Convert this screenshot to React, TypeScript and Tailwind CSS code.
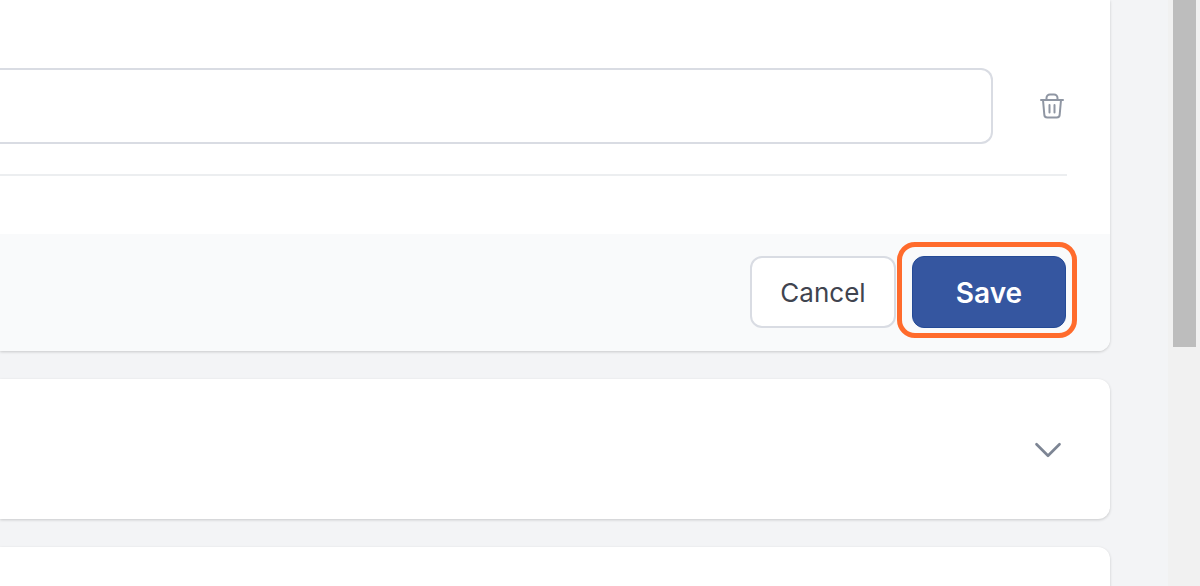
import { ChevronDown } from "lucide-react";

function TrashIcon() {
  return (
    <svg viewBox="0 0 24 26" className="h-[26px] w-6 text-[#8f96a3]" fill="none" stroke="currentColor" strokeWidth="2" strokeLinecap="round" strokeLinejoin="round">
      <path d="M1 7h22" />
      <path d="M6.5 7V5a3.5 3.5 0 0 1 3.5-3.5h4A3.5 3.5 0 0 1 17.5 5v2" />
      <path d="M3 7l1.3 14.5a3 3 0 0 0 3 3h9.400a3 3 0 0 0 3-3L21 7" />
      <path d="M9.5 12v7.500M14.500 12v7.500" />
    </svg>
  );
}

export default function App() {
  return (
    <div className="flex h-[586px] w-[1200px] overflow-hidden bg-[#f3f4f6] font-['Inter',sans-serif]">
      {/* Page content */}
      <main className="flex w-[1168px] flex-col gap-7 pr-[58px]">
        <section className="h-[351px] shrink-0 overflow-hidden rounded-br-xl bg-white shadow-[0_1px_3px_rgba(0,0,0,0.18)]">
          <div className="h-[234px] pt-[68px] pr-[43px]">
            <div className="flex items-center">
              <div className="h-[76px] flex-1 rounded-r-xl border-y-2 border-r-2 border-[#d9dce3] bg-white" />
              <div className="flex w-[74px] justify-end pr-[3px]">
                <TrashIcon />
              </div>
            </div>
            <div className="mt-[30px] h-0.5 bg-[#eceef0]" />
          </div>
          <div className="relative flex h-[117px] justify-end gap-4 bg-[#f9fafb] pt-[22px] pr-11">
            <button className="h-[72px] w-[146px] rounded-xl border-2 border-[#d9dce3] bg-white text-[26px] text-[#40444f]">
              Cancel
            </button>
            <button className="h-[72px] w-[154px] rounded-xl border border-[#244a96] bg-[#3556a0] pt-0.5 text-[28px] font-semibold text-white">
              Save
            </button>
            {/* Highlight round the step's target */}
            <div className="absolute top-2 right-[33px] h-24 w-[180px] rounded-[18px] border-[5px] border-[#ff6b2c]" />
          </div>
        </section>

        <section className="flex h-[140px] shrink-0 items-center justify-end rounded-r-xl bg-white pr-[39px] shadow-[0_1px_3px_rgba(0,0,0,0.18)]">
          <ChevronDown className="mt-0.5 h-[46px] w-[46px] text-[#7d8594]" strokeWidth={1.4} />
        </section>

        <section className="h-[140px] shrink-0 rounded-r-xl bg-white shadow-[0_1px_3px_rgba(0,0,0,0.18)]" />
      </main>

      {/* Scrollbar */}
      <div className="h-full w-8 bg-[#f1f1f1] px-[5px]">
        <div className="h-[347px] w-[23px] bg-[#bdbdbd]" />
      </div>
    </div>
  );
}
